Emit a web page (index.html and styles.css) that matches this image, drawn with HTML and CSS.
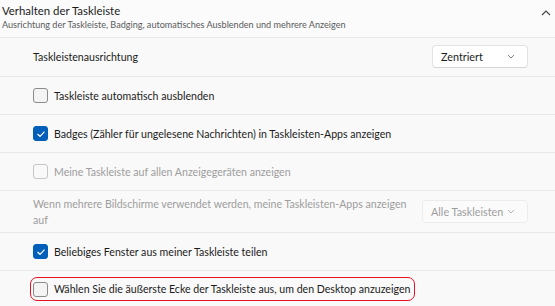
FILE: index.html
```html
<!DOCTYPE html>
<html lang="de">
<head>
    <meta charset="UTF-8">
    <title>Verhalten der Taskleiste</title>
    <link rel="stylesheet" href="styles.css">
</head>
<body>
    <div class="panel">
        <!-- Kopfzeile des Abschnitts -->
        <div class="section-head">
            <div class="head-text">
                <div class="head-title">Verhalten der Taskleiste</div>
                <div class="head-sub">Ausrichtung der Taskleiste, Badging, automatisches Ausblenden und mehrere Anzeigen</div>
            </div>
            <svg class="head-chevron" width="10" height="6" viewBox="0 0 10 6">
                <path d="M1 5 L5 1 L9 5" fill="none" stroke="#444" stroke-width="1.1"/>
            </svg>
        </div>

        <div class="row row-first">
            <span class="label">Taskleistenausrichtung</span>
            <div class="dropdown">
                <span>Zentriert</span>
                <svg width="8" height="5" viewBox="0 0 8 5"><path d="M1 1 L4 4 L7 1" fill="none" stroke="#777" stroke-width="0.9"/></svg>
            </div>
        </div>

        <div class="row">
            <span class="check"></span>
            <span class="label">Taskleiste automatisch ausblenden</span>
        </div>

        <div class="row">
            <span class="check checked">
                <svg width="10" height="8" viewBox="0 0 10 8"><path d="M1.5 4 L4 6.3 L8.5 1.6" fill="none" stroke="#fff" stroke-width="1.2"/></svg>
            </span>
            <span class="label">Badges (Zähler für ungelesene Nachrichten) in Taskleisten-Apps anzeigen</span>
        </div>

        <div class="row disabled">
            <span class="check"></span>
            <span class="label">Meine Taskleiste auf allen Anzeigegeräten anzeigen</span>
        </div>

        <div class="row row-multi disabled">
            <span class="label wrap">Wenn mehrere Bildschirme verwendet werden, meine Taskleisten-Apps anzeigen auf</span>
            <div class="dropdown dropdown-wide">
                <span>Alle Taskleisten</span>
                <svg width="8" height="5" viewBox="0 0 8 5"><path d="M1 1 L4 4 L7 1" fill="none" stroke="#aaa" stroke-width="0.9"/></svg>
            </div>
        </div>

        <div class="row">
            <span class="check checked">
                <svg width="10" height="8" viewBox="0 0 10 8"><path d="M1.5 4 L4 6.3 L8.5 1.6" fill="none" stroke="#fff" stroke-width="1.2"/></svg>
            </span>
            <span class="label">Beliebiges Fenster aus meiner Taskleiste teilen</span>
        </div>

        <div class="row row-last">
            <div class="highlight">
                <span class="check"></span>
                <span class="label">Wählen Sie die äußerste Ecke der Taskleiste aus, um den Desktop anzuzeigen</span>
            </div>
        </div>
    </div>
</body>
</html>
```

FILE: styles.css
```css
body {
    margin: 0;
    padding: 0;
    background-color: #f9f9f9;
    font-family: 'Lato', 'Noto Sans', sans-serif;
    color: #1b1b1b;
    overflow: hidden;
}
.panel {
    width: 555px;
}
.section-head {
    height: 37px;
    border-bottom: 1px solid #e8e8e8;
    background-color: #fbfbfc;
    display: flex;
    align-items: center;
    justify-content: space-between;
    padding: 0 8px 0 2px;
}
.head-text {
    margin-top: -4px;
}
.head-title {
    font-size: 11.4px;
    line-height: 15px;
}
.head-sub {
    font-size: 9.1px;
    line-height: 13px;
    color: #5a5a5a;
}
.head-chevron {
    margin-top: -12px;
    margin-right: -4px;
}
.row {
    min-height: 37px;
    border-bottom: 1px solid #e8e8e8;
    display: flex;
    align-items: center;
    padding: 0 27px 0 33px;
    font-size: 10.6px;
}
.row-first {
    min-height: 38px;
    justify-content: space-between;
}
.row-multi {
    min-height: 41px;
    justify-content: space-between;
}
.row-last {
    border-bottom: none;
    padding-left: 30px;
    align-items: flex-start;
    padding-top: 6px;
}
.label {
    white-space: nowrap;
}
.label.wrap {
    white-space: normal;
    width: 375px;
    line-height: 16px;
}
.check {
    width: 13px;
    height: 13px;
    border: 1px solid #8b8b8b;
    border-radius: 3px;
    background-color: #f4f4f4;
    margin-right: 6px;
    display: flex;
    align-items: center;
    justify-content: center;
    flex-shrink: 0;
}
.check.checked {
    border-color: #005fb8;
    background-color: #005fb8;
}
.disabled {
    color: #9d9d9d;
}
.disabled .check {
    border-color: #c6c6c6;
    background-color: #f9f9f9;
}
.dropdown {
    width: 96px;
    height: 23px;
    box-sizing: border-box;
    background-color: #ffffff;
    border: 1px solid #e3e3e3;
    border-bottom-color: #d4d4d4;
    border-radius: 4px;
    display: flex;
    align-items: center;
    justify-content: space-between;
    padding: 0 12px 0 8px;
    font-size: 10.8px;
    white-space: nowrap;
    margin-top: -1px;
    flex-shrink: 0;
}
.dropdown-wide {
    width: 106px;
    background-color: #fbfbfb;
    border-color: #ececec;
}
.highlight {
    display: flex;
    align-items: center;
    height: 22px;
    padding: 0 4px 0 2px;
    border: 1px solid #e81123;
    border-radius: 7px;
}
```
